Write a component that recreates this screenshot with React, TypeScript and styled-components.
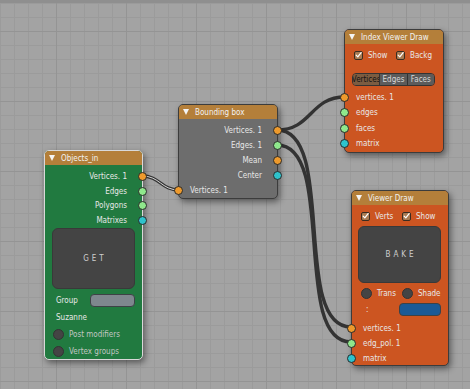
import React from 'react'
import styled, { createGlobalStyle } from 'styled-components'

const GlobalStyle = createGlobalStyle`
    html, body {
        margin: 0;
        padding: 0;
        background: #a3a3a3;
    }
    body {
        font-family: "DejaVu Sans Condensed", "DejaVu Sans", "Liberation Sans", sans-serif;
        font-size: 8px;
    }
`

const Canvas = styled.div`
    position: relative;
    width: 470px;
    height: 389px;
    overflow: hidden;
    background-color: #a3a3a3;
    background-image:
        linear-gradient(to bottom, #8f8f8f 0, #8f8f8f 3px, transparent 3px),
        linear-gradient(to right, #949494 1px, transparent 1px),
        linear-gradient(to bottom, #949494 1px, transparent 1px),
        linear-gradient(to right, #9b9b9b 1px, transparent 1px),
        linear-gradient(to bottom, #9b9b9b 1px, transparent 1px);
    background-size: 100% 100%, 70px 70px, 70px 70px, 14px 14px, 14px 14px;
    background-position: 0 0, 56px 0, 0 31px, 0 0, 0 3px;
    background-repeat: no-repeat, repeat, repeat, repeat, repeat;
`

const Wires = styled.svg`
    position: absolute;
    left: 0;
    top: 0;
    width: 470px;
    height: 389px;
    pointer-events: none;
`

const Node = styled.div<{ $x: number, $y: number, $w: number, $h: number, $body: string, $selected?: boolean }>`
    position: absolute;
    left: ${p => p.$x}px;
    top: ${p => p.$y}px;
    width: ${p => p.$w}px;
    height: ${p => p.$h}px;
    box-sizing: border-box;
    display: flex;
    flex-direction: column;
    background: ${p => p.$body};
    border: 1px solid ${p => p.$selected ? '#d9d9d9' : '#3c3c3c'};
    border-radius: 5px;
    box-shadow: 2px 3px 6px rgba(0, 0, 0, 0.45);
    color: #e8e8e8;
`

const Header = styled.div`
    height: 14px;
    flex: none;
    display: flex;
    align-items: center;
    gap: 6px;
    padding-left: 4px;
    background: #b47f3a;
    border-radius: 4px 4px 0 0;
    color: #f2f2f2;
    white-space: nowrap;
    overflow: hidden;
`

const Arrow = styled.span`
    width: 0;
    height: 0;
    border-left: 3.5px solid transparent;
    border-right: 3.5px solid transparent;
    border-top: 6px solid #f4f4f4;
`

const Sockets = styled.div<{ $pad: number, $row: number }>`
    display: flex;
    flex-direction: column;
    padding-top: ${p => p.$pad}px;
    > div { height: ${p => p.$row}px; }
`

const Row = styled.div<{ $side: 'in' | 'out' }>`
    position: relative;
    display: flex;
    align-items: center;
    justify-content: ${p => p.$side === 'out' ? 'flex-end' : 'flex-start'};
    padding: ${p => p.$side === 'out' ? '0 15px 0 0' : '0 0 0 11px'};
    white-space: nowrap;
`

const socketColors = {
    verts: '#ee9a2c',
    edges: '#8fe88c',
    matrix: '#2ec3cc',
}

const Socket = styled.span<{ $side: 'in' | 'out', $kind: keyof typeof socketColors }>`
    position: absolute;
    top: 50%;
    ${p => p.$side === 'out' ? 'right: -5px' : 'left: -5px'};
    width: 7px;
    height: 7px;
    margin-top: -4.5px;
    border-radius: 50%;
    border: 1px solid #2a2a2a;
    background: ${p => socketColors[p.$kind]};
`

const BigButton = styled.div<{ $h: number, $margin: string }>`
    height: ${p => p.$h}px;
    margin: ${p => p.$margin};
    flex: none;
    display: flex;
    align-items: center;
    justify-content: center;
    background: #444444;
    border: 1px solid #393939;
    border-radius: 6px;
    color: #cfcfcf;
    letter-spacing: 3px;
    padding-left: 3px;
    font-size: 8px;
`

const Controls = styled.div<{ $pad: string, $gap: number }>`
    display: flex;
    flex-direction: column;
    padding: ${p => p.$pad};
    gap: ${p => p.$gap}px;
`

const ControlRow = styled.div<{ $h?: number }>`
    display: flex;
    align-items: center;
    height: ${p => p.$h ?? 14}px;
    white-space: nowrap;
`

const Label = styled.span<{ $muted?: boolean, $w?: number, $indent?: number }>`
    color: ${p => p.$muted ? '#c2c6c3' : '#e8e8e8'};
    width: ${p => p.$w ? `${p.$w}px` : 'auto'};
    padding-left: ${p => p.$indent ?? 0}px;
    flex: none;
`

const TextField = styled.div<{ $bg: string, $w: number }>`
    width: ${p => p.$w}px;
    height: 13px;
    border-radius: 4px;
    background: ${p => p.$bg};
    border: 1px solid #3d4246;
    box-sizing: border-box;
`

const Radio = styled.span`
    width: 9px;
    height: 9px;
    border-radius: 50%;
    background: #444;
    border: 1px solid #333;
    margin-right: 5px;
    flex: none;
`

const Option = styled.div<{ $w: number }>`
    display: flex;
    align-items: center;
    width: ${p => p.$w}px;
    flex: none;
`

const Box = styled.span`
    width: 9px;
    height: 9px;
    box-sizing: border-box;
    border-radius: 2px;
    background: #a97b52;
    border: 1px solid #3b2c20;
    margin-right: 5px;
    display: flex;
    align-items: center;
    justify-content: center;
    flex: none;
`

const Tabs = styled.div`
    display: flex;
    height: 13px;
    margin: 0 8px 0 7px;
    border-radius: 4px;
    overflow: hidden;
    border: 1px solid #333;
    box-sizing: border-box;
`

const Tab = styled.div<{ $active?: boolean }>`
    flex: 1;
    display: flex;
    align-items: center;
    justify-content: center;
    overflow: hidden;
    white-space: nowrap;
    background: ${p => p.$active ? '#7b5c41' : '#5b5b5b'};
    color: ${p => p.$active ? '#111' : '#d8d8d8'};
    border-left: 1px solid #333;
    &:first-child { border-left: none; }
`

const Check = ({ label, w }: { label: string, w: number }) => (
    <Option $w={w}>
        <Box>
            <svg width="8" height="8" viewBox="0 0 8 8">
                <path d="M1.3 4.2 L3.2 6.2 L7 1.2" fill="none" stroke="#fff" strokeWidth="1.4" strokeLinecap="round" strokeLinejoin="round" />
            </svg>
        </Box>
        <Label>{label}</Label>
    </Option>
)

const Wire = ({ d, selected }: { d: string, selected?: boolean }) => (
    <>
        <path d={d} fill="none" stroke="#333333" strokeWidth={3.4} strokeLinecap="round" />
        {selected && <path d={d} fill="none" stroke="#d6d6d6" strokeWidth={1} />}
    </>
)

export default function App() {
    return <>
        <GlobalStyle />
        <Canvas>
            <Wires viewBox="0 0 470 389">
                <Wire d="M142,176 C160,176 161,190 179,190" selected />
                <Wire d="M277,130 C312,130 310,97 345,97" />
                <Wire d="M277,130 C337,130 291,327 351,327" />
                <Wire d="M277,145 C337,145 291,342 351,342" />
            </Wires>

            <Node $x={44} $y={150} $w={99} $h={210} $body="#217a40" $selected>
                <Header><Arrow />Objects_in</Header>
                <Sockets $pad={4} $row={14.8}>
                    <Row $side="out">Vertices. 1<Socket $side="out" $kind="verts" /></Row>
                    <Row $side="out">Edges<Socket $side="out" $kind="edges" /></Row>
                    <Row $side="out">Polygons<Socket $side="out" $kind="edges" /></Row>
                    <Row $side="out">Matrixes<Socket $side="out" $kind="matrix" /></Row>
                </Sockets>
                <BigButton $h={59} $margin="0 7px 0 7px">GET</BigButton>
                <Controls $pad="4px 7px 0 8px" $gap={3}>
                    <ControlRow>
                        <Label $w={34} $indent={3}>Group</Label>
                        <TextField $bg="#7e878e" $w={49} />
                    </ControlRow>
                    <ControlRow><Label $indent={3}>Suzanne</Label></ControlRow>
                    <ControlRow><Radio /><Label $muted>Post modifiers</Label></ControlRow>
                    <ControlRow><Radio /><Label $muted>Vertex groups</Label></ControlRow>
                </Controls>
            </Node>

            <Node $x={178} $y={104} $w={100} $h={95} $body="#6d6d6d">
                <Header><Arrow />Bounding box</Header>
                <Sockets $pad={3.5} $row={15}>
                    <Row $side="out">Vertices. 1<Socket $side="out" $kind="verts" /></Row>
                    <Row $side="out">Edges. 1<Socket $side="out" $kind="edges" /></Row>
                    <Row $side="out">Mean<Socket $side="out" $kind="verts" /></Row>
                    <Row $side="out">Center<Socket $side="out" $kind="matrix" /></Row>
                    <Row $side="in">Vertices. 1<Socket $side="in" $kind="verts" /></Row>
                </Sockets>
            </Node>

            <Node $x={344} $y={29} $w={100} $h={124} $body="#cc5521">
                <Header><Arrow />Index Viewer Draw</Header>
                <Controls $pad="5px 0 0 9px" $gap={0}>
                    <ControlRow $h={12}>
                        <Check label="Show" w={42} />
                        <Check label="Backg" w={45} />
                    </ControlRow>
                </Controls>
                <Controls $pad="12px 0 0 0" $gap={0}>
                    <Tabs>
                        <Tab $active>Vertices</Tab>
                        <Tab>Edges</Tab>
                        <Tab>Faces</Tab>
                    </Tabs>
                </Controls>
                <Sockets $pad={3.5} $row={15.5}>
                    <Row $side="in">vertices. 1<Socket $side="in" $kind="verts" /></Row>
                    <Row $side="in">edges<Socket $side="in" $kind="edges" /></Row>
                    <Row $side="in">faces<Socket $side="in" $kind="edges" /></Row>
                    <Row $side="in">matrix<Socket $side="in" $kind="matrix" /></Row>
                </Sockets>
            </Node>

            <Node $x={351} $y={190} $w={98} $h={176} $body="#cc5521">
                <Header><Arrow />Viewer Draw</Header>
                <Controls $pad="5px 0 0 9px" $gap={0}>
                    <ControlRow $h={12}>
                        <Check label="Verts" w={41} />
                        <Check label="Show" w={45} />
                    </ControlRow>
                </Controls>
                <BigButton $h={55} $margin="4px 7px 0 6px">BAKE</BigButton>
                <Controls $pad="4px 0 0 9px" $gap={4}>
                    <ControlRow $h={12}>
                        <Option $w={41}><Radio /><Label>Trans</Label></Option>
                        <Option $w={45}><Radio /><Label>Shade</Label></Option>
                    </ControlRow>
                    <ControlRow $h={13}>
                        <Label $w={33} $indent={5}>:</Label>
                        <TextField $bg="#1b5a96" $w={42} />
                    </ControlRow>
                </Controls>
                <Sockets $pad={5} $row={15}>
                    <Row $side="in">vertices. 1<Socket $side="in" $kind="verts" /></Row>
                    <Row $side="in">edg_pol. 1<Socket $side="in" $kind="edges" /></Row>
                    <Row $side="in">matrix<Socket $side="in" $kind="matrix" /></Row>
                </Sockets>
            </Node>
        </Canvas>
    </>
}
